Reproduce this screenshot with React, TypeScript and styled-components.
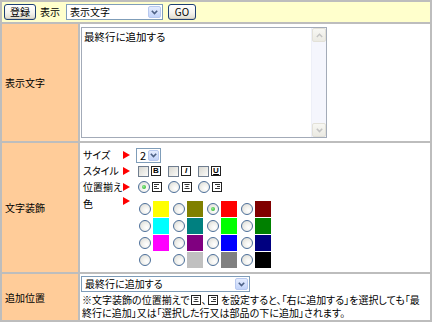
import React from "react";
import styled, { createGlobalStyle } from "styled-components";

const Global = createGlobalStyle`
  html, body { margin: 0; padding: 0; background: #fff; }
  body {
    font-family: "Noto Sans CJK JP", "Noto Sans", sans-serif;
    font-size: 10px;
    color: #000;
    font-feature-settings: "palt";
  }
`;

const Frame = styled.div`
  width: 432px;
  box-sizing: border-box;
  background: #bdbdbd;
  padding: 2px;
  display: grid;
  grid-template-columns: 76px 1fr;
  gap: 2px;
`;

const Toolbar = styled.div`
  grid-column: 1 / -1;
  background: #ffffcc;
  height: 20px;
  display: flex;
  align-items: center;
  padding-left: 2px;
`;

const XpButton = styled.button<{ $w: number }>`
  width: ${(p) => p.$w}px;
  height: 16px;
  padding: 0;
  box-sizing: border-box;
  font: inherit;
  font-size: 10px;
  line-height: 14px;
  color: #000;
  border: 1px solid #1d3f73;
  border-radius: 3px;
  background: linear-gradient(#ffffff, #f4f3ee 55%, #dedbcf);
  box-shadow: inset 0 -1px 0 #d2cdbd;
`;

const ToolLabel = styled.span`
  margin: 0 6px 0 4px;
  line-height: 14px;
`;

const SelectBox = styled.div<{ $w: number; $h: number }>`
  width: ${(p) => p.$w}px;
  height: ${(p) => p.$h}px;
  box-sizing: border-box;
  border: 1px solid #7f9db9;
  background: #fff;
  display: flex;
  align-items: center;
`;

const SelectText = styled.span<{ $size?: number }>`
  flex: 1;
  min-width: 0;
  padding-left: 3px;
  white-space: nowrap;
  font-size: ${(p) => p.$size ?? 10}px;
  line-height: 12px;
`;

const SelectArrow = styled.span<{ $aw?: number }>`
  width: ${(p) => p.$aw ?? 13}px;
  flex: none;
  align-self: stretch;
  margin: 1px;
  box-sizing: border-box;
  border: 1px solid #b8c9ef;
  border-radius: 2px;
  background: linear-gradient(#e4ecfe, #c2d3f9);
  display: flex;
  align-items: center;
  justify-content: center;
`;

const Spacer = styled.span<{ $w: number }>`
  width: ${(p) => p.$w}px;
  flex: none;
`;

const LabelCell = styled.div`
  background: #ffcc99;
  display: flex;
  align-items: center;
  padding-left: 3px;
  line-height: 13px;
`;

const ContentCell = styled.div<{ $pad: string }>`
  background: #fff;
  padding: ${(p) => p.$pad};
  min-width: 0;
`;

const TextArea = styled.div`
  width: 246px;
  height: 111px;
  box-sizing: border-box;
  border: 1px solid #a3abb8;
  display: flex;
`;

const TextBody = styled.div`
  flex: 1;
  padding: 2px 2px;
  font-size: 10.5px;
  line-height: 13px;
`;

const ScrollBar = styled.div`
  width: 14px;
  background: #f5f6fd;
  border-left: 1px solid #eef0f8;
  display: flex;
  flex-direction: column;
  justify-content: space-between;
`;

const ScrollButton = styled.span`
  height: 14px;
  box-sizing: border-box;
  border: 1px solid #e3e1d8;
  border-radius: 2px;
  background: linear-gradient(#f7f7f3, #ebeae3);
  display: flex;
  align-items: center;
  justify-content: center;
`;

const DecoGrid = styled.div`
  display: grid;
  grid-template-columns: 40px 13px 1fr;
  grid-template-rows: 16px 16px 16px auto;
  align-items: center;
`;

const DecoLabel = styled.span<{ $top?: number }>`
  line-height: 12px;
  white-space: nowrap;
  align-self: ${(p) => (p.$top !== undefined ? "start" : "center")};
  padding-top: ${(p) => p.$top ?? 0}px;
`;

const ArrowCell = styled.span<{ $top?: number }>`
  display: flex;
  align-self: ${(p) => (p.$top !== undefined ? "start" : "center")};
  padding-top: ${(p) => p.$top ?? 0}px;
`;

const ControlRow = styled.div`
  display: flex;
  align-items: center;
`;

const ColorRow = styled.div`
  grid-column: 1 / -1;
  align-self: start;
  display: grid;
  grid-template-columns: 40px 13px 1fr;
`;

const Checkbox = styled.span<{ $first?: boolean }>`
  width: 11px;
  height: 11px;
  box-sizing: border-box;
  margin-left: ${(p) => (p.$first ? 2 : 7)}px;
  border: 1px solid #6f7d8f;
  background: linear-gradient(135deg, #d9d8d1, #fbfbf9);
  flex: none;
`;

const StyleIcon = styled.span<{ $italic?: boolean; $under?: boolean }>`
  width: 10px;
  height: 10px;
  margin-left: 2px;
  box-sizing: border-box;
  border: 1px solid #222;
  font-family: "Liberation Sans", Arial, sans-serif;
  font-weight: bold;
  font-size: 8px;
  line-height: 8px;
  text-align: center;
  font-style: ${(p) => (p.$italic ? "italic" : "normal")};
  text-decoration: ${(p) => (p.$under ? "underline" : "none")};
  flex: none;
`;

const Radio = styled.span<{ $on?: boolean; $ml: number }>`
  width: 12px;
  height: 12px;
  margin-left: ${(p) => p.$ml}px;
  box-sizing: border-box;
  border-radius: 50%;
  border: 1px solid #4c6f99;
  background: radial-gradient(circle at 65% 65%, #ffffff 0, #f2f2ee 40%, #d6d5cf 100%);
  display: flex;
  align-items: center;
  justify-content: center;
  flex: none;
  &::after {
    content: "";
    display: ${(p) => (p.$on ? "block" : "none")};
    width: 4px;
    height: 4px;
    border-radius: 50%;
    background: radial-gradient(circle at 40% 40%, #8ef08e, #1ea21e);
  }
`;

const AlignIcon = styled.svg`
  margin-left: 2px;
  flex: none;
`;

const ColorGrid = styled.div`
  grid-column: 3;
  padding-top: 5px;
  display: grid;
  grid-template-columns: repeat(4, 34px);
  grid-auto-rows: 17px;
  align-items: center;
`;

const ColorCell = styled.div`
  display: flex;
  align-items: center;
`;

const Swatch = styled.span<{ $c: string }>`
  width: 16px;
  height: 16px;
  margin-left: 2px;
  background: ${(p) => p.$c};
  flex: none;
`;

const Note = styled.div`
  padding-left: 1px;
  margin-top: 1px;
  line-height: 13px;
`;

const NoteLine = styled.div`
  white-space: nowrap;
  display: flex;
  align-items: center;
`;

const InlineIcon = styled.svg`
  margin: 0 1px;
  flex: none;
`;

const Chevron = ({ color = "#4d6185" }: { color?: string }) => (
  <svg width="7" height="5" viewBox="0 0 7 5">
    <polyline points="0.8,0.8 3.5,3.6 6.2,0.8" fill="none" stroke={color} strokeWidth="1.6" />
  </svg>
);

const ChevronUp = ({ color = "#c4c4c4" }: { color?: string }) => (
  <svg width="7" height="5" viewBox="0 0 7 5">
    <polyline points="0.8,4 3.5,1.2 6.2,4" fill="none" stroke={color} strokeWidth="1.4" />
  </svg>
);

const RedArrow = () => (
  <svg width="7" height="8" viewBox="0 0 7 8">
    <polygon points="0,0 7,4 0,8" fill="#ff0000" />
  </svg>
);

type Align = "left" | "center" | "right";

const alignLines = (a: Align) => {
  const rows = [
    { y: 2.5, w: 5 },
    { y: 4.5, w: 3 },
    { y: 6.5, w: 5 },
  ];
  return rows.map((r, i) => {
    let x1 = 2;
    if (a === "center") x1 = 5 - r.w / 2;
    if (a === "right") x1 = 8 - r.w;
    return <line key={i} x1={x1} y1={r.y} x2={x1 + r.w} y2={r.y} stroke="#333" strokeWidth="1" />;
  });
};

const AlignGlyph = ({ a, inline }: { a: Align; inline?: boolean }) => {
  const Comp = inline ? InlineIcon : AlignIcon;
  return (
    <Comp width="10" height="10" viewBox="0 0 10 10">
      <rect x="0.5" y="0.5" width="9" height="9" fill="#fff" stroke="#222" />
      {alignLines(a)}
    </Comp>
  );
};

const colors: string[][] = [
  ["#ffff00", "#808000", "#ff0000", "#800000"],
  ["#00ffff", "#008080", "#00ff00", "#008000"],
  ["#ff00ff", "#800080", "#0000ff", "#000080"],
  ["#ffffff", "#c0c0c0", "#808080", "#000000"],
];

export default function App() {
  return (
    <>
      <Global />
      <Frame>
        <Toolbar>
          <XpButton $w={32}>登録</XpButton>
          <ToolLabel>表示</ToolLabel>
          <SelectBox $w={97} $h={16}>
            <SelectText>表示文字</SelectText>
            <SelectArrow>
              <Chevron />
            </SelectArrow>
          </SelectBox>
          <Spacer $w={5} />
          <XpButton $w={28}>GO</XpButton>
        </Toolbar>

        <LabelCell>表示文字</LabelCell>
        <ContentCell $pad="3px 1px">
          <TextArea>
            <TextBody>最終行に追加する</TextBody>
            <ScrollBar>
              <ScrollButton>
                <ChevronUp />
              </ScrollButton>
              <ScrollButton>
                <Chevron color="#c4c4c4" />
              </ScrollButton>
            </ScrollBar>
          </TextArea>
        </ContentCell>

        <LabelCell>文字装飾</LabelCell>
        <ContentCell $pad="4px 3px 4px 3px">
          <DecoGrid>
            <DecoLabel>サイズ</DecoLabel>
            <ArrowCell>
              <RedArrow />
            </ArrowCell>
            <ControlRow>
              <SelectBox $w={25} $h={15}>
                <SelectText $size={11}>2</SelectText>
                <SelectArrow $aw={11}>
                  <Chevron />
                </SelectArrow>
              </SelectBox>
            </ControlRow>

            <DecoLabel>スタイル</DecoLabel>
            <ArrowCell>
              <RedArrow />
            </ArrowCell>
            <ControlRow>
              <Checkbox $first />
              <StyleIcon>B</StyleIcon>
              <Checkbox />
              <StyleIcon $italic>I</StyleIcon>
              <Checkbox />
              <StyleIcon $under>U</StyleIcon>
            </ControlRow>

            <DecoLabel>位置揃え</DecoLabel>
            <ArrowCell>
              <RedArrow />
            </ArrowCell>
            <ControlRow>
              <Radio $ml={2} $on />
              <AlignGlyph a="left" />
              <Radio $ml={6} />
              <AlignGlyph a="center" />
              <Radio $ml={6} />
              <AlignGlyph a="right" />
            </ControlRow>

            <ColorRow>
              <DecoLabel $top={3}>色</DecoLabel>
              <ArrowCell $top={2}>
                <RedArrow />
              </ArrowCell>
              <ColorGrid>
                {colors.map((row, ri) =>
                  row.map((c, ci) => (
                    <ColorCell key={`${ri}-${ci}`}>
                      <Radio $ml={3} $on={ri === 0 && ci === 2} />
                      <Swatch $c={c} />
                    </ColorCell>
                  ))
                )}
              </ColorGrid>
            </ColorRow>
          </DecoGrid>
        </ContentCell>

        <LabelCell>追加位置</LabelCell>
        <ContentCell $pad="2px 2px 1px 1px">
          <SelectBox $w={169} $h={16}>
            <SelectText>最終行に追加する</SelectText>
            <SelectArrow>
              <Chevron />
            </SelectArrow>
          </SelectBox>
          <Note>
            <NoteLine>
              ※文字装飾の位置揃えで
              <AlignGlyph a="center" inline />、
              <AlignGlyph a="right" inline />
              &nbsp;を設定すると、「右に追加する」を選択しても「最
            </NoteLine>
            <NoteLine>終行に追加」又は「選択した行又は部品の下に追加」されます。</NoteLine>
          </Note>
        </ContentCell>
      </Frame>
    </>
  );
}
